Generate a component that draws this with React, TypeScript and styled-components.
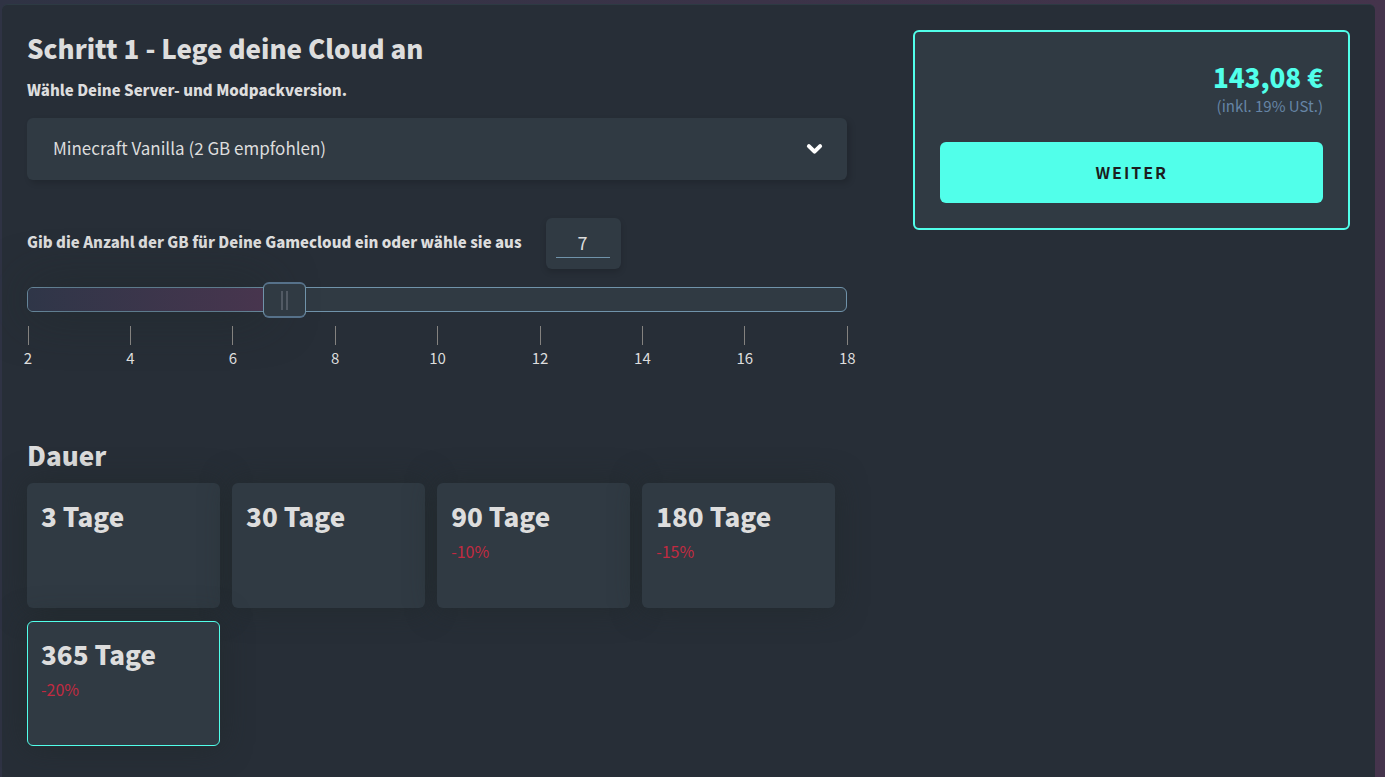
import React, { useState } from "react";
import styled, { createGlobalStyle } from "styled-components";

const colors = {
  panel: "#272e37",
  surface: "#303a43",
  text: "#dddddd",
  line: "#7093aa",
  accent: "#51ffea",
  muted: "#6685a6",
  discount: "#c12a41",
};

const GlobalStyle = createGlobalStyle`
  *, *::before, *::after { box-sizing: border-box; }
  body {
    margin: 0;
    min-height: 100vh;
    overflow: hidden;
    background: linear-gradient(90deg, #2f3344 0%, #3b3348 55%, #45344c 100%) fixed;
    color: ${colors.text};
    font-family: "Noto Sans CJK JP", "Open Sans", sans-serif;
    font-size: 16px;
    line-height: 24px;
  }
  button, input, select { font: inherit; color: inherit; }
`;

const Panel = styled.main`
  display: flex;
  justify-content: space-between;
  align-items: flex-start;
  min-height: 100vh;
  margin: 4px 10px 0 2px;
  padding: 25px;
  border-top: 1px solid #2d3a43;
  border-radius: 6px 6px 0 0;
  background: ${colors.panel};
`;

const Configurator = styled.form`
  width: 62%;
`;

const Title = styled.h1`
  margin: 0;
  font-size: 26px;
  line-height: 36px;
  font-weight: 900;
`;

const FieldLabel = styled.label`
  display: block;
  font-size: 15px;
  font-weight: 900;
`;

const VersionField = styled.div`
  margin-top: 12px;
`;

const SelectBox = styled.div`
  display: grid;
  align-items: center;
  margin-top: 16px;
  & > * { grid-area: 1 / 1; }
  & > svg {
    justify-self: end;
    margin-right: 24px;
    pointer-events: none;
  }
`;

const Select = styled.select`
  appearance: none;
  width: 100%;
  height: 62px;
  padding: 0 60px 2px 26px;
  border: 0;
  border-radius: 6px;
  background: ${colors.surface};
  box-shadow: 3px 3px 6px rgba(0, 0, 0, 0.16);
  font-size: 17px;
`;

const AmountRow = styled.div`
  display: flex;
  align-items: center;
  gap: 24px;
  margin-top: 38px;
  & > label { padding-bottom: 4px; }
`;

const AmountBox = styled.div`
  width: 75px;
  height: 51px;
  padding: 10px 11px 0 10px;
  border-radius: 6px;
  background: ${colors.surface};
  box-shadow: 0 3px 6px rgba(0, 0, 0, 0.16);
`;

const AmountInput = styled.input`
  appearance: textfield;
  display: block;
  width: 100%;
  height: 30px;
  padding: 0 0 2px;
  border: 0;
  border-bottom: 1px solid ${colors.line};
  background: transparent;
  text-align: center;
  font-size: 18px;
  &::-webkit-inner-spin-button { appearance: none; }
`;

const Slider = styled.div`
  display: grid;
  align-items: center;
  margin-top: 13px;
  & > * { grid-area: 1 / 1; }
`;

const Track = styled.div`
  height: 25px;
  margin-bottom: 2px;
  border: 1px solid ${colors.line};
  border-radius: 6px;
  background: ${colors.surface};
`;

const Fill = styled.div`
  height: 100%;
  border-radius: 5px;
  background: linear-gradient(90deg, #2f3648, #48354e);
  box-shadow: 0 0 50px rgba(32, 40, 40, 0.7);
`;

const Range = styled.input`
  appearance: none;
  width: calc(100% + 43px);
  height: 36px;
  margin: 0 -23px 0 -20px;
  background: transparent;
  &::-webkit-slider-thumb {
    appearance: none;
    width: 43px;
    height: 36px;
    border: 1px solid ${colors.line};
    border-top: 2px solid #56718a;
    border-bottom: 2px solid #56718a;
    border-radius: 6px;
    background:
      linear-gradient(#525a64, #525a64) 17px 7px / 2px 19px no-repeat,
      linear-gradient(#525a64, #525a64) 22px 7px / 2px 19px no-repeat,
      ${colors.surface};
  }
`;

const Scale = styled.div`
  display: flex;
  justify-content: space-between;
  margin: 8px -15px 0 -14px;
`;

const Tick = styled.span`
  display: flex;
  flex-direction: column;
  align-items: center;
  width: 30px;
  font-size: 15px;
  line-height: 26px;
  &::before {
    content: "";
    width: 1px;
    height: 19px;
    background: #84827f;
  }
`;

const DurationGroup = styled.fieldset`
  margin: 66px 0 0;
  padding: 0;
  border: 0;
`;

const Legend = styled.legend`
  padding: 0;
  font-size: 26px;
  line-height: 36px;
  font-weight: 900;
`;

const DurationGrid = styled.div`
  display: grid;
  grid-template-columns: repeat(4, 1fr);
  gap: 13px 12px;
  margin-top: 10px;
  padding-right: 12px;
`;

const DurationCard = styled.label<{ $selected: boolean }>`
  height: 125px;
  padding: 14px 13px;
  border: 1px solid ${(p) => (p.$selected ? colors.accent : "transparent")};
  border-radius: 6px;
  background: ${colors.surface} border-box;
  box-shadow: 0 0 30px rgba(32, 40, 40, 0.6);
  cursor: pointer;
`;

const HiddenRadio = styled.input`
  position: absolute;
  opacity: 0;
  pointer-events: none;
`;

const Days = styled.span`
  display: block;
  font-size: 26px;
  line-height: 36px;
  font-weight: 900;
`;

const Discount = styled.span`
  display: block;
  margin-top: 5px;
  color: ${colors.discount};
  font-size: 16px;
`;

const Summary = styled.aside`
  width: 33%;
  padding: 27px 25px 25px;
  border: 2px solid ${colors.accent};
  border-radius: 6px;
  background: ${colors.surface};
  text-align: right;
`;

const Price = styled.div`
  color: ${colors.accent};
  font-size: 26px;
  line-height: 36px;
  font-weight: 900;
`;

const Tax = styled.div`
  color: ${colors.muted};
  font-size: 15px;
  line-height: 22px;
  font-weight: 400;
`;

const NextButton = styled.button`
  display: block;
  width: 100%;
  height: 61px;
  margin-top: 25px;
  padding: 0 0 2px;
  border: 0;
  border-radius: 6px;
  background: ${colors.accent};
  color: #1c1d20;
  font-size: 16px;
  font-weight: 700;
  letter-spacing: 2px;
  cursor: pointer;
`;

const durations = [
  { days: 3 },
  { days: 30 },
  { days: 90, discount: "-10%" },
  { days: 180, discount: "-15%" },
  { days: 365, discount: "-20%" },
];

const MIN = 2;
const MAX = 18;
const ticks = [2, 4, 6, 8, 10, 12, 14, 16, 18];

function Chevron() {
  return (
    <svg width="17" height="12" viewBox="0 0 17 12" aria-hidden="true">
      <path
        d="M2.9 3.1 8.5 8.7 14.1 3.1"
        fill="none"
        stroke="#fff"
        strokeWidth="4"
        strokeLinecap="round"
        strokeLinejoin="round"
      />
    </svg>
  );
}

export default function App() {
  const [amount, setAmount] = useState(7);
  const [duration, setDuration] = useState(365);
  const percent = ((amount - MIN) / (MAX - MIN)) * 100;

  return (
    <>
      <GlobalStyle />
      <Panel>
        <Configurator onSubmit={(e) => e.preventDefault()}>
          <Title>Schritt 1 - Lege deine Cloud an</Title>
          <VersionField>
            <FieldLabel htmlFor="version">Wähle Deine Server- und Modpackversion.</FieldLabel>
            <SelectBox>
              <Select id="version">
                <option>Minecraft Vanilla (2 GB empfohlen)</option>
              </Select>
              <Chevron />
            </SelectBox>
          </VersionField>
          <AmountRow>
            <FieldLabel htmlFor="amount">
              Gib die Anzahl der GB für Deine Gamecloud ein oder wähle sie aus
            </FieldLabel>
            <AmountBox>
              <AmountInput
                id="amount"
                type="number"
                min={MIN}
                max={MAX}
                value={amount}
                onChange={(e) => setAmount(Number(e.target.value))}
              />
            </AmountBox>
          </AmountRow>
          <Slider>
            <Track>
              <Fill style={{ width: `calc(${percent}% - 18px)` }} />
            </Track>
            <Range
              type="range"
              aria-label="GB"
              min={MIN}
              max={MAX}
              value={amount}
              onChange={(e) => setAmount(Number(e.target.value))}
            />
          </Slider>
          <Scale>
            {ticks.map((t) => (
              <Tick key={t}>{t}</Tick>
            ))}
          </Scale>
          <DurationGroup>
            <Legend>Dauer</Legend>
            <DurationGrid>
              {durations.map((d) => (
                <DurationCard key={d.days} $selected={d.days === duration}>
                  <HiddenRadio
                    type="radio"
                    name="duration"
                    checked={d.days === duration}
                    onChange={() => setDuration(d.days)}
                  />
                  <Days>{d.days} Tage</Days>
                  {d.discount && <Discount>{d.discount}</Discount>}
                </DurationCard>
              ))}
            </DurationGrid>
          </DurationGroup>
        </Configurator>
        <Summary>
          <Price>143,08 €</Price>
          <Tax>(inkl. 19% USt.)</Tax>
          <NextButton type="button">WEITER</NextButton>
        </Summary>
      </Panel>
    </>
  );
}
